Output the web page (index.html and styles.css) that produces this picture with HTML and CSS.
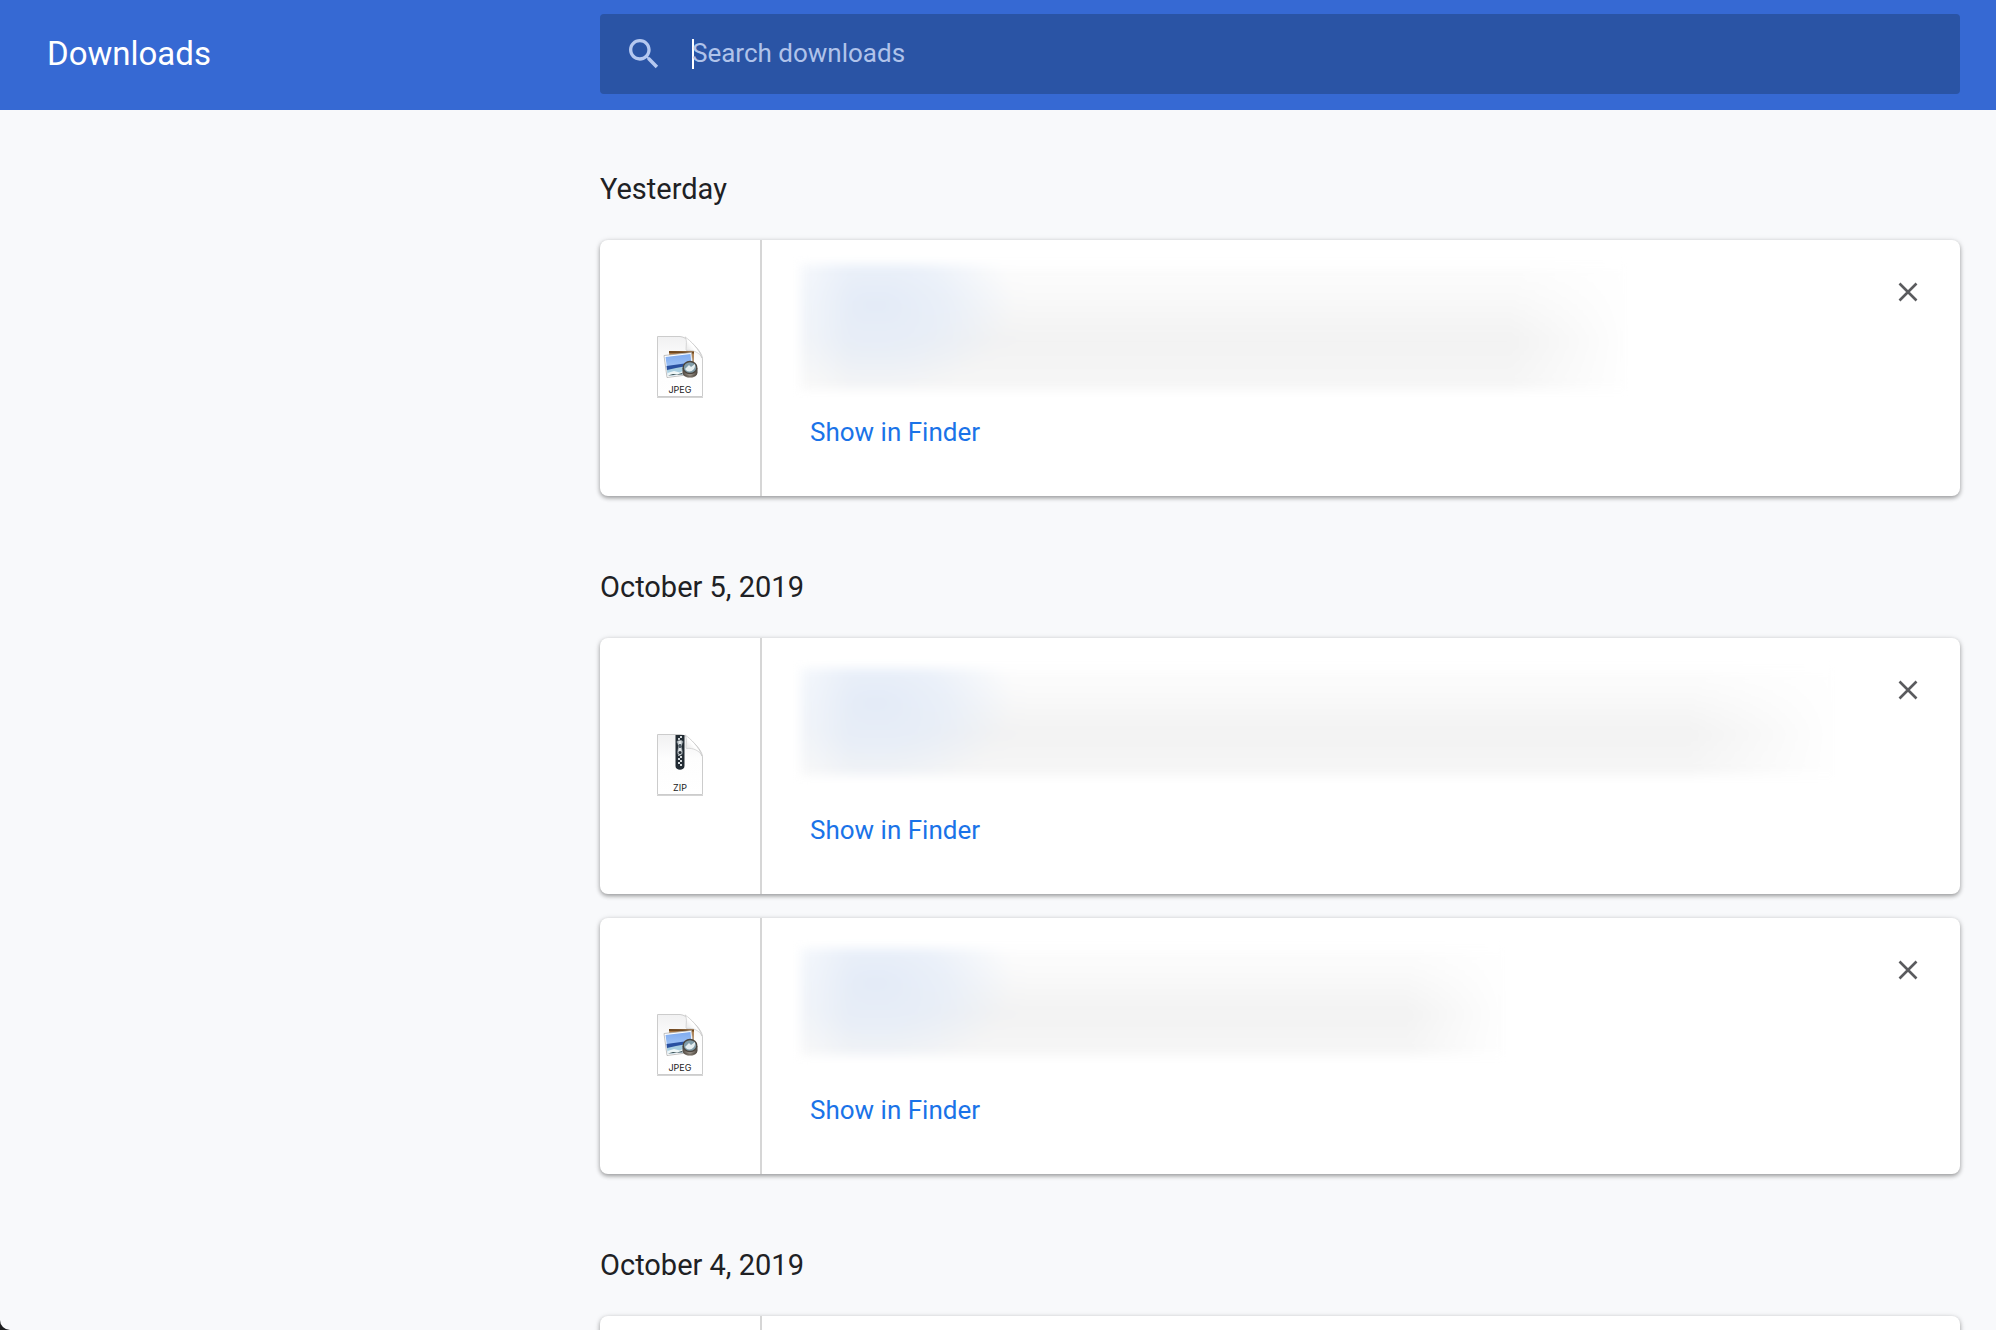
FILE: index.html
```html
<!DOCTYPE html>
<html lang="en">
<head>
<meta charset="utf-8">
<meta name="viewport" content="width=device-width, initial-scale=1">
<title>Downloads</title>
<link rel="stylesheet" href="styles.css">
</head>
<body>
<svg class="symbols" aria-hidden="true">
  <defs>
    <linearGradient id="paper" x1="0" y1="0" x2="0" y2="1"><stop offset="0" stop-color="#f1f1f2"/><stop offset="0.4" stop-color="#fdfdfd"/><stop offset="1" stop-color="#ffffff"/></linearGradient>
    <linearGradient id="fold" x1="0" y1="1" x2="1" y2="0"><stop offset="0.1" stop-color="#dcdcdc"/><stop offset="0.5" stop-color="#ffffff"/></linearGradient>
    <linearGradient id="sky" x1="0" y1="0" x2="0" y2="1"><stop offset="0" stop-color="#7fabf0"/><stop offset="1" stop-color="#b4d3fa"/></linearGradient>
    <linearGradient id="metal" x1="0" y1="0" x2="1" y2="0"><stop offset="0" stop-color="#4d463f"/><stop offset="0.5" stop-color="#a29a90"/><stop offset="1" stop-color="#4a433c"/></linearGradient>
    <linearGradient id="steel" x1="0" y1="0" x2="1" y2="0"><stop offset="0" stop-color="#8d989f"/><stop offset="0.5" stop-color="#f0f3f4"/><stop offset="1" stop-color="#76828a"/></linearGradient>
    <pattern id="teeth" width="4" height="4" patternUnits="userSpaceOnUse" x="30"><rect width="2" height="2" fill="#d4d9dc"/><rect x="2" y="2" width="2" height="2" fill="#d4d9dc"/></pattern>
  </defs>
  <symbol id="page" viewBox="0 0 64 64">
    <path d="M9 61.5H55" stroke="#d4d4d4"/>
    <path d="M9.500 .5H32C39 .5 54.500 15 54.500 23V60.500H9.500Z" fill="url(#paper)" stroke="#cccccc"/>
  </symbol>
  <symbol id="page-fold" viewBox="0 0 64 64">
    <path d="M37 .9C40 5 37 13.500 38.500 14.500 45 13.500 52 17 54 22 51 13 43 5 37 .9Z" fill="url(#fold)" stroke="#c8c8c8" stroke-width=".7"/>
  </symbol>
  <symbol id="photo" viewBox="0 0 64 64">
    <path d="M21 15 46 15.500 45.500 34H22Z" fill="#a97845"/>
    <path d="M21 15 46 15.500 46 17.500 21 17Z" fill="#704921"/>
    <path d="M16 19.500 43.500 16.500 46 38 19 41.500Z" fill="#fff" stroke="#a7a7a7" stroke-width=".7"/>
    <path d="M17.500 21 42.500 18 44.500 37 20 40Z" fill="url(#sky)"/>
    <path d="M18.500 30 43.500 26.500 44 31 19 34.500Z" fill="#2950a0"/>
    <path d="M19 34 28 32 36 30.500 44 31 44.500 37 20 40Z" fill="#a8cee0"/>
    <path d="M19.500 37 26 35 32 36.500 38 33 40 37.500 20 40Z" fill="#eef6f7"/>
    <path d="M20 39.500 25 38 29 38.500 34 37 35 38.200Z" fill="#354b50"/>
    <path d="M34.500 32V36.500C35 43.500 49 43.500 49.500 36.500V32Z" fill="url(#metal)"/>
    <path d="M35 38C38 41 46 41 49 38" fill="none" stroke="#5b534a" stroke-width=".8"/>
    <ellipse cx="42" cy="31.500" rx="6.800" ry="6" fill="#819da9" stroke="#4a443d" stroke-width="1.300"/>
    <path d="M37 33 41 29 43 31 47 28C47.500 34 43 36.500 39 35Z" fill="#e5eef0"/>
  </symbol>
  <symbol id="zipper" viewBox="0 0 64 64">
    <path d="M27.500 1H36.500V32C36.500 37 27.500 37 27.500 32Z" fill="#222b33"/>
    <path d="M30 2H34V32H30Z" fill="url(#teeth)"/>
    <path d="M28.500 8C28.500 5.500 35.500 5.500 35.500 8L33.500 12 35 18C35 22.500 29 22.500 29 18L30.500 12Z" fill="url(#steel)" stroke="#28323a" stroke-width=".6"/>
    <circle cx="32" cy="18.500" r="1.500" fill="#222b33"/>
    <path d="M31 10H33V14H31Z" fill="#53606a"/>
  </symbol>
  <symbol id="close" viewBox="0 0 40 40"><path d="M11.500 11.500 28.500 28.500M28.500 11.500 11.500 28.500" stroke="#5a5b5e" stroke-width="2.600"/></symbol>
</svg>
<div class="app">
  <header class="toolbar">
    <h1 class="toolbar-title">Downloads</h1>
    <label class="search">
      <svg class="search-icon" viewBox="0 0 24 24" aria-hidden="true"><path fill="currentColor" d="M15.500 14h-.79l-.28-.27C15.410 12.590 16 11.110 16 9.500 16 5.910 13.090 3 9.500 3S3 5.910 3 9.500 5.910 16 9.500 16c1.610 0 3.090-.59 4.230-1.570l.27.28v.79l5 4.990L20.490 19l-4.990-5zm-6 0C7.010 14 5 11.990 5 9.500S7.010 5 9.500 5 14 7.010 14 9.500 11.990 14 9.500 14z"/></svg>
      <span class="caret"></span>
      <input class="search-input" type="text" placeholder="Search downloads" aria-label="Search downloads">
    </label>
  </header>
  <main class="downloads">
    <div class="list">
      <section class="day">
        <h2 class="date">Yesterday</h2>
        <article class="card">
          <div class="thumb"><svg class="file-icon" viewBox="0 0 64 64"><use href="#page"/><use href="#page-fold"/><use href="#photo"/><text x="32" y="57" class="file-label">JPEG</text></svg></div>
          <div class="details">
            <div class="hidden-info hidden-tall"></div>
            <a class="show" href="#">Show in Finder</a>
          </div>
          <button class="remove" type="button" aria-label="Remove from list"><svg class="remove-icon"><use href="#close"/></svg></button>
        </article>
      </section>
      <section class="day">
        <h2 class="date">October 5, 2019</h2>
        <article class="card">
          <div class="thumb"><svg class="file-icon" viewBox="0 0 64 64"><use href="#page"/><use href="#zipper"/><use href="#page-fold"/><text x="32" y="57" class="file-label">ZIP</text></svg></div>
          <div class="details">
            <div class="hidden-info hidden-long"></div>
            <a class="show" href="#">Show in Finder</a>
          </div>
          <button class="remove" type="button" aria-label="Remove from list"><svg class="remove-icon"><use href="#close"/></svg></button>
        </article>
        <article class="card">
          <div class="thumb"><svg class="file-icon" viewBox="0 0 64 64"><use href="#page"/><use href="#page-fold"/><use href="#photo"/><text x="32" y="57" class="file-label">JPEG</text></svg></div>
          <div class="details">
            <div class="hidden-info hidden-short"></div>
            <a class="show" href="#">Show in Finder</a>
          </div>
          <button class="remove" type="button" aria-label="Remove from list"><svg class="remove-icon"><use href="#close"/></svg></button>
        </article>
      </section>
      <section class="day">
        <h2 class="date">October 4, 2019</h2>
        <article class="card">
          <div class="thumb"></div>
        </article>
      </section>
    </div>
  </main>
</div>
</body>
</html>
```

FILE: styles.css
```css
* {
  box-sizing: border-box;
}

body {
  margin: 0;
  background: #1c1d1f;
  color: #202124;
  font-family: Roboto, "Liberation Sans", sans-serif;
}

.symbols {
  position: absolute;
  width: 0;
  height: 0;
}

.file-label {
  font-family: Inter, sans-serif;
  font-size: 9px;
  text-anchor: middle;
  fill: #222;
}

.app {
  display: flex;
  flex-direction: column;
  height: 100vh;
  overflow: hidden;
  border-bottom-left-radius: 10px;
  background: #f8f9fb;
}

.toolbar,
.downloads {
  display: grid;
  grid-template-columns: minmax(240px, 1fr) minmax(0, 1360px);
  padding-right: 36px;
}

.toolbar {
  flex: none;
  align-items: center;
  padding-top: 14px;
  padding-bottom: 16px;
  background: #3669d3;
}

.toolbar-title {
  margin: 0;
  padding-left: 47px;
  color: #fff;
  font-size: 33px;
  font-weight: 400;
  line-height: 40px;
}

.search {
  display: flex;
  align-items: center;
  padding: 0 24px;
  height: 80px;
  border-radius: 4px;
  background: #2a54a5;
  color: #b5c8f0;
}

.search-icon {
  flex: none;
  width: 40px;
  height: 40px;
  margin-right: 28px;
}

.caret {
  width: 2px;
  height: 30px;
  margin-right: -2px;
  background: #fff;
}

.search-input {
  flex: 1;
  min-width: 0;
  padding: 0 0 2px;
  border: 0;
  outline: 0;
  background: none;
  color: #fff;
  font: 400 26px/32px Roboto, "Liberation Sans", sans-serif;
}

.search-input::placeholder {
  color: #b0c3ea;
  opacity: 1;
}

.downloads {
  flex: 1;
  min-height: 0;
  overflow-y: auto;
  scrollbar-width: none;
}

.list {
  grid-column: 2;
  display: flex;
  flex-direction: column;
  gap: 75px;
  padding: 63px 0;
}

.day {
  display: flex;
  flex-direction: column;
  gap: 24px;
}

.date {
  margin: 0 0 11px;
  font-size: 29px;
  font-weight: 400;
  line-height: 32px;
}

.card {
  display: flex;
  min-height: 256px;
  border-radius: 8px;
  background: #fff;
  box-shadow: 0 2px 4px rgba(0, 0, 0, 0.32), 0 1px 6px rgba(0, 0, 0, 0.12);
}

.thumb {
  display: flex;
  flex: none;
  align-items: center;
  justify-content: center;
  width: 162px;
  border-right: 2px solid #d6d6d6;
}

.file-icon {
  width: 64px;
  height: 64px;
}

.details {
  display: flex;
  flex: 1;
  flex-direction: column;
  align-items: flex-start;
  justify-content: space-between;
  min-width: 0;
  padding: 24px 0 48px 38px;
}

.hidden-info {
  max-width: 100%;
  height: 108px;
  margin-top: 6px;
  background:
    linear-gradient(to right, rgba(255, 255, 255, 0.4), rgba(255, 255, 255, 0) 50px),
    radial-gradient(ellipse 140px 90px at 76px 32%, rgba(226, 234, 247, 0.95), rgba(228, 236, 248, 0.7) 50%, rgba(240, 243, 250, 0)),
    linear-gradient(to right, rgba(255, 255, 255, 0) 85%, #fff),
    linear-gradient(#fdfdfd, #f9f9f9 25%, #f2f2f2 60%, #f6f6f6);
  filter: blur(5px);
}

.hidden-tall {
  width: 832px;
  height: 126px;
  margin-top: 0;
}

.hidden-long {
  width: 1040px;
}

.hidden-short {
  width: 710px;
}

.show {
  padding: 0 10px;
  color: #1a73e8;
  font-size: 26px;
  line-height: 32px;
  text-decoration: none;
}

.remove {
  flex: none;
  align-self: flex-start;
  width: 40px;
  height: 40px;
  margin: 32px 32px 0 0;
  padding: 0;
  border: 0;
  background: none;
}

.remove-icon {
  display: block;
  width: 40px;
  height: 40px;
}
```
